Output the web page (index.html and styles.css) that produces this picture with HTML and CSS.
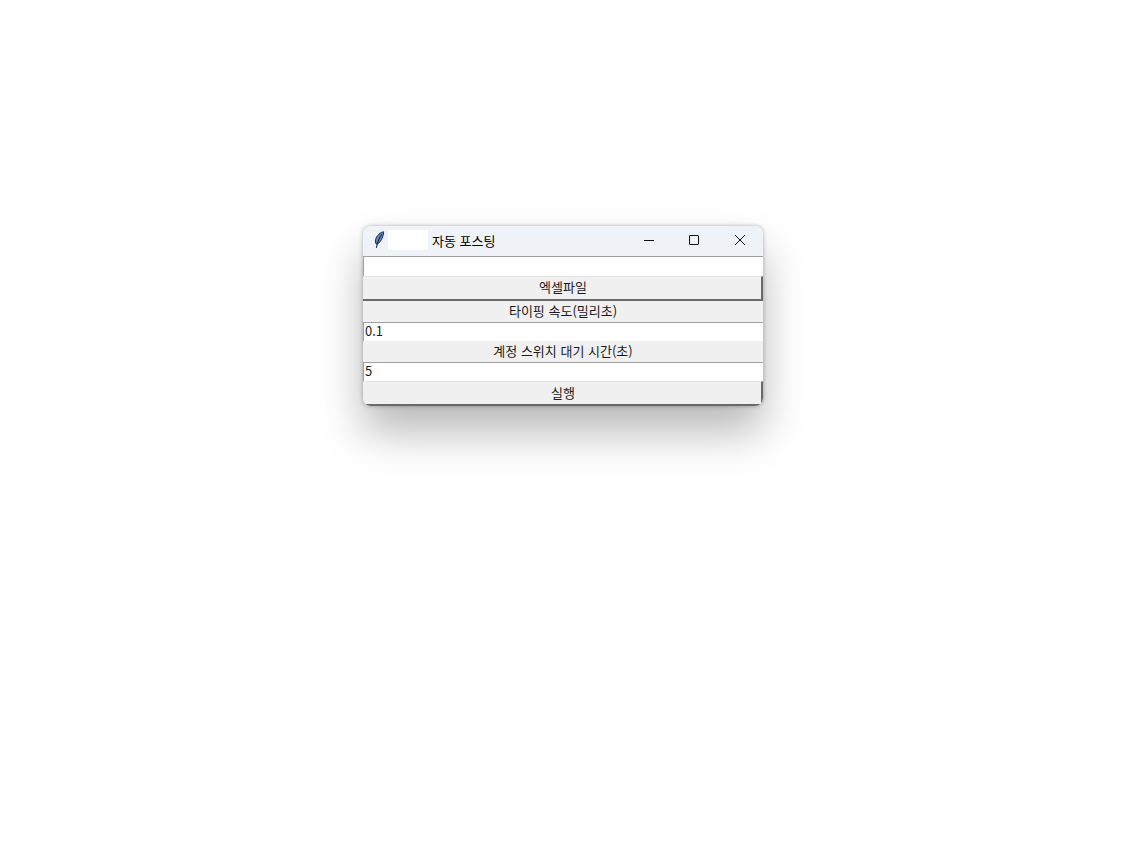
FILE: index.html
```html
<!DOCTYPE html>
<html lang="ko">
<head>
    <meta charset="UTF-8">
    <meta name="viewport" content="width=device-width, initial-scale=1.0">
    <title>자동 포스팅</title>
    <link rel="stylesheet" href="styles.css">
</head>
<body>
    <div class="window">
        <div class="title-bar">
            <svg class="app-icon" width="12" height="18" viewBox="0 0 12 18">
                <path d="M10.5 0.8C7.5 1.2 3.6 4.5 2.6 8.5C2.2 10.5 2.4 12.2 3.4 13.2C6.2 12.6 8.4 9.5 9.6 6C10.4 4 10.8 2 10.5 0.8Z" fill="#5c8cc4" stroke="#1c2c4c" stroke-width="1"/>
                <path d="M8.8 3.2C6.5 6.5 4.5 10.5 3.4 16.8" fill="none" stroke="#0c1424" stroke-width="1"/>
            </svg>
            <div class="title-blank"></div>
            <span class="title-text">자동 포스팅</span>
            <div class="win-controls">
                <div class="win-btn">
                    <svg width="12" height="12" viewBox="0 0 12 12"><path d="M2 6.5H12" stroke="#111" stroke-width="1"/></svg>
                </div>
                <div class="win-btn">
                    <svg width="12" height="12" viewBox="0 0 12 12"><rect x="1.5" y="1.5" width="9" height="9" rx="0.5" fill="none" stroke="#111" stroke-width="1"/></svg>
                </div>
                <div class="win-btn">
                    <svg width="12" height="12" viewBox="0 0 12 12"><path d="M1 1L11 11M11 1L1 11" stroke="#111" stroke-width="1"/></svg>
                </div>
            </div>
        </div>
        <div class="content">
            <div class="entry entry-file"></div>
            <div class="btn">엑셀파일</div>
            <div class="label">타이핑 속도(밀리초)</div>
            <div class="entry">0.1</div>
            <div class="label">계정 스위치 대기 시간(초)</div>
            <div class="entry">5</div>
            <div class="btn btn-run">실행</div>
        </div>
    </div>
</body>
</html>
```

FILE: styles.css
```css
html, body {
    margin: 0;
    height: 100%;
}
body {
    background-color: #fff;
    font-family: "Noto Sans CJK KR", "Liberation Sans", sans-serif;
    font-size: 13px;
    color: #1a1a1a;
    padding: 226px 0 0 363px;
    box-sizing: border-box;
    overflow: hidden;
}
.window {
    width: 400px;
    height: 180px;
    border-radius: 8px;
    overflow: hidden;
    background-color: #f0f0f0;
    box-shadow: 0 26px 44px rgba(0, 0, 0, 0.28), 0 0 4px rgba(0, 0, 0, 0.3);
    display: flex;
    flex-direction: column;
}
.title-bar {
    height: 28px;
    padding-bottom: 2px;
    flex: none;
    display: flex;
    align-items: center;
    background-color: #eff2f7;
    border-bottom: 1px solid #a0a0a0;
}
.app-icon {
    margin-left: 10px;
    flex: none;
}
.title-blank {
    width: 40px;
    height: 20px;
    margin-left: 3px;
    background-color: #fff;
}
.title-text {
    margin-left: 4px;
    color: #000;
}
.win-controls {
    margin-left: auto;
    display: flex;
}
.win-btn {
    width: 46px;
    height: 28px;
    display: flex;
    align-items: center;
    justify-content: center;
}
.content {
    flex: 1;
    display: flex;
    flex-direction: column;
}
.entry {
    height: 18px;
    background-color: #fff;
    padding-left: 1px;
    line-height: 16px;
    border-left: 1px solid #a0a0a0;
}
.entry-file {
    height: 19px;
}
.btn {
    text-align: center;
    background-color: #f0f0f0;
    border-top: 1px solid #e3e3e3;
    border-right: 2px solid #696969;
    border-bottom: 2px solid #696969;
    height: 22px;
    line-height: 19px;
    padding-left: 2px;
}
.btn-run {
    line-height: 21px;
}
.label {
    height: 21px;
    line-height: 19px;
    text-align: center;
    background-color: #f0f0f0;
    border-bottom: 1px solid #a0a0a0;
}
```
